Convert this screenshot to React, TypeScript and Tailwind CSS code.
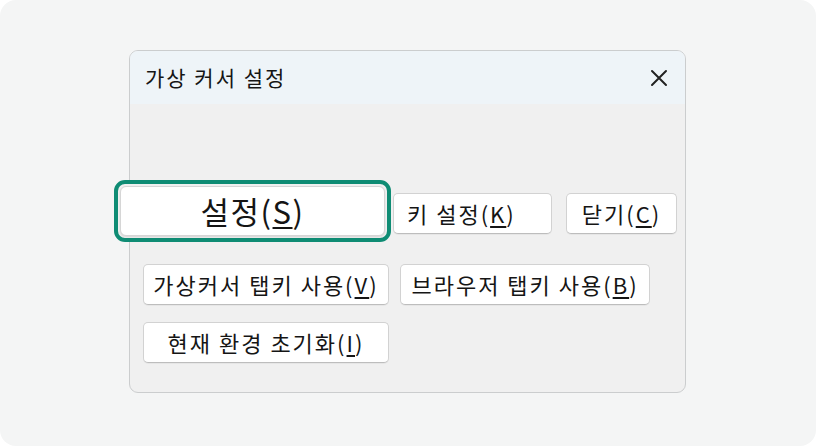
import React from 'react'

const font = { fontFamily: '"Noto Sans CJK KR", "Noto Sans", sans-serif' }

function Key({ children }: { children: React.ReactNode }) {
  return <span className="underline underline-offset-[3px] decoration-[1.5px]">{children}</span>
}

function Btn({ children, className = '' }: { children: React.ReactNode; className?: string }) {
  return (
    <div
      className={
        'flex h-[41px] items-center rounded-[5px] border border-[#d2d2d2] border-b-[#bdbdbd] bg-white text-[22px] tracking-[2px] text-[#151515] shadow-[0_1px_0_rgba(0,0,0,0.04)] ' +
        className
      }
    >
      {children}
    </div>
  )
}

export default function App() {
  return (
    <div className="h-[446px] w-[816px] bg-white" style={font}>
      <div className="h-full w-full rounded-[16px] bg-[#f4f5f5] pt-[50px] pl-[129px]">
        <div className="flex h-[343px] w-[557px] flex-col rounded-[9px] border border-[#cbcdce] bg-[#f0f0f0]">
          <div className="flex h-[53px] items-center justify-between rounded-t-[8px] bg-[#eef4f8] pl-[15px] pr-[17px]">
            <span className="text-[21px] tracking-[2px] text-[#151515]">가상 커서 설정</span>
            <svg width="18" height="18" viewBox="0 0 18 18" className="text-[#222]">
              <path d="M2 2 L16 16 M16 2 L2 16" stroke="currentColor" strokeWidth="2" strokeLinecap="round" />
            </svg>
          </div>

          <div className="flex flex-col pt-[89px] pl-[13px]">
            <div className="flex h-[41px] items-center">
              <div className="relative z-10 ml-[-29px] -mt-[13px] -mb-[8px] flex h-[62px] w-[277px] shrink-0 items-center justify-center rounded-[11px] border-[4px] border-[#0f8c74] bg-[#f0f0f0] p-[2px]">
                <div className="flex h-full w-full items-center justify-center rounded-[6px] border border-[#d6d6d6] bg-white text-[31px] tracking-[1.5px] text-[#151515] shadow-[0_1px_2px_rgba(0,0,0,0.12)]">
                  설정(<Key>S</Key>)
                </div>
              </div>
              <Btn className="ml-[2px] w-[159px] justify-start pl-[13px]">
                키 설정(<Key>K</Key>)
              </Btn>
              <Btn className="ml-[14px] w-[111px] justify-center">
                닫기(<Key>C</Key>)
              </Btn>
            </div>

            <div className="mt-[30px] flex gap-[11px]">
              <Btn className="w-[246px] justify-center">
                가상커서 탭키 사용(<Key>V</Key>)
              </Btn>
              <Btn className="w-[250px] justify-center">
                브라우저 탭키 사용(<Key>B</Key>)
              </Btn>
            </div>

            <div className="mt-[17px] flex">
              <Btn className="w-[246px] justify-center">
                현재 환경 초기화(<Key>I</Key>)
              </Btn>
            </div>
          </div>
        </div>
      </div>
    </div>
  )
}
